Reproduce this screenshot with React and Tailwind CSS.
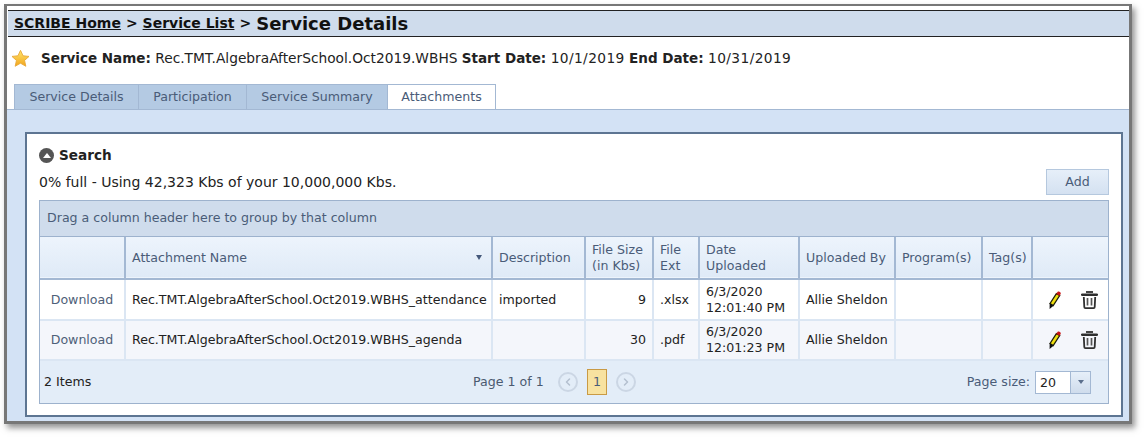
import React from "react";
import { ChevronLeft, ChevronRight } from "lucide-react";

const font = { fontFamily: '"DejaVu Sans", Verdana, sans-serif' };

const tabs = [
  { label: "Service Details", width: "w-[124px]" },
  { label: "Participation", width: "w-[108px]" },
  { label: "Service Summary", width: "w-[141px]" },
  { label: "Attachments", width: "w-[109px]", active: true },
];

const rows = [
  {
    name: "Rec.TMT.AlgebraAfterSchool.Oct2019.WBHS_attendance",
    description: "imported",
    size: "9",
    ext: ".xlsx",
    date: "6/3/2020",
    time: "12:01:40 PM",
  },
  {
    name: "Rec.TMT.AlgebraAfterSchool.Oct2019.WBHS_agenda",
    description: "",
    size: "30",
    ext: ".pdf",
    date: "6/3/2020",
    time: "12:01:23 PM",
  },
];

const headCell =
  "border-r-2 border-[#a3b8d3] px-[6px] text-left align-middle font-normal leading-[16px] text-[#4a5c78] last:border-r-0";
const bodyCell = "border-r-2 border-[#dbe6f3] px-[6px] align-middle leading-[16px] last:border-r-0";

const StarIcon = () => (
  <svg width="19" height="19" viewBox="0 0 21 20">
    <defs>
      <linearGradient id="starFill" x1="0" y1="0" x2="0" y2="1">
        <stop offset="0" stopColor="#ffe56b" />
        <stop offset="1" stopColor="#f2a51c" />
      </linearGradient>
    </defs>
    <path
      d="M10.5 1l2.8 6 6.6.7-4.9 4.4 1.4 6.5-5.9-3.4-5.9 3.4 1.4-6.5L1.1 7.7l6.6-.7z"
      fill="url(#starFill)"
      stroke="#e8a93a"
      strokeWidth="1"
      strokeLinejoin="round"
    />
  </svg>
);

const PencilIcon = () => (
  <svg width="12" height="18" viewBox="0 0 12 18">
    <path d="M1 12.5L7.4 2.6l3.3 1.9L4.2 14.6z" fill="#efdf10" stroke="#1d1d08" strokeWidth="1.3" />
    <path d="M7.2 3l1.3-2c1-.9 3.2-.2 3.3 1.6l-1 2.1z" fill="#c81414" />
    <path d="M.7 12.2l3.8 2.5L.6 18z" fill="#0e0e0e" />
  </svg>
);

const TrashIcon = () => (
  <svg width="17" height="18" viewBox="0 0 17 18" fill="none">
    <path d="M5 1h7" stroke="#444" strokeWidth="2" />
    <path d="M1.2 3.7h14.6" stroke="#2f2f2f" strokeWidth="2.6" strokeLinecap="round" />
    <path d="M2.8 6l.5 10c0 .6.5 1.1 1.1 1.1h8.2c.6 0 1.1-.5 1.1-1.1l.5-10" stroke="#2f2f2f" strokeWidth="1.8" />
    <path d="M6.5 7v7.5M10.5 7v7.5" stroke="#555" strokeWidth="1.7" />
  </svg>
);

const PagerArrow = ({ children }) => (
  <span className="flex h-[20px] w-[20px] items-center justify-center rounded-full border-2 border-[#cbd6e4] text-[#b4c0cf]">
    {children}
  </span>
);

export default function App() {
  return (
    <div className="h-[438px] w-[1146px] bg-white pl-[4px] pt-[4px] text-[12.6px] text-[#222]" style={font}>
      <div className="flex h-[420px] w-[1128px] flex-col border-x-[3px] border-y-[3px] border-[#777] border-t-2 bg-white shadow-[3px_4px_6px_rgba(60,60,60,0.55)]">
        <div className="mt-[4px] ml-px flex h-[27px] shrink-0 items-center gap-[5px] border-y border-[#222] bg-[#cfdcec] pl-[6px] font-bold text-[#111]">
          <span className="text-[14px] underline">SCRIBE Home</span>
          <span className="text-[14px]">&gt;</span>
          <span className="text-[14px] underline">Service List</span>
          <span className="text-[14px]">&gt;</span>
          <span className="text-[18px] leading-none">Service Details</span>
        </div>

        <div className="flex h-[47px] shrink-0 items-center pb-[4px] pl-[4px] text-[13.75px]">
          <StarIcon />
          <span className="ml-[11px] whitespace-pre">
            <b className="text-[13.5px]">Service Name:</b> Rec.TMT.AlgebraAfterSchool.Oct2019.WBHS <b className="text-[13.5px]">Start Date:</b>{" "}
            <span className="tracking-[0.4px]">10/1/2019</span> <b className="text-[13.5px]">End Date:</b>{" "}
            <span className="tracking-[0.4px]">10/31/2019</span>
          </span>
        </div>

        <div className="flex h-[25px] shrink-0 pl-[7px]">
          {tabs.map((tab) => (
            <div
              key={tab.label}
              className={
                tab.active
                  ? `${tab.width} flex items-center justify-center border-x border-t border-[#a3b8d3] bg-white text-[#4a5c78]`
                  : `${tab.width} flex items-center justify-center border-l border-t border-[#a3b8d3] bg-[#b4cae3] text-[#4a5c78]`
              }
            >
              {tab.label}
            </div>
          ))}
        </div>

        <div className="min-h-0 flex-1 border-t border-[#a3b8d3] bg-[#d3e2f5] pb-[3px] pl-[18px] pr-[7px] pt-[22px]">
          <div className="flex h-[285px] w-[1098px] flex-col border-2 border-[#5d7592] bg-white pl-[12px] pr-[12px]">
            <div className="flex h-[35px] shrink-0 items-center gap-[5px] pt-[7px]">
              <span className="flex h-[15px] w-[15px] items-center justify-center rounded-full bg-[#555]">
                <span className="h-0 w-0 border-x-[4px] border-b-[5px] border-x-transparent border-b-white" />
              </span>
              <span className="text-[13.6px] font-bold text-[#222]">Search</span>
            </div>

            <div className="flex h-[26px] shrink-0 items-center justify-between">
              <span className="text-[14px]">0% full - Using 42,323 Kbs of your 10,000,000 Kbs.</span>
              <button className="h-[26px] w-[63px] border border-[#b5c8de] bg-gradient-to-b from-[#e6eff9] to-[#d4e1f1] text-[#4a5c78]">
                Add
              </button>
            </div>

            <div className="mt-[5px] flex h-[204px] w-[1070px] shrink-0 flex-col overflow-hidden border border-[#9db2cd]">
              <div className="flex h-[36px] shrink-0 items-center border-b border-[#9db2cd] bg-[#cfdcec] pl-[7px] text-[#4a5c78]">
                Drag a column header here to group by that column
              </div>

              <table className="w-full shrink-0 table-fixed border-collapse">
                <colgroup>
                  <col className="w-[85px]" />
                  <col className="w-[367px]" />
                  <col className="w-[93px]" />
                  <col className="w-[68px]" />
                  <col className="w-[46px]" />
                  <col className="w-[100px]" />
                  <col className="w-[96px]" />
                  <col className="w-[87px]" />
                  <col className="w-[50px]" />
                  <col className="w-[76px]" />
                </colgroup>
                <thead>
                  <tr className="h-[42px] border-b-2 border-[#a3b8d3] bg-gradient-to-b from-[#edf4fc] to-[#dfeaf7]">
                    <th className={headCell}></th>
                    <th className={headCell}>
                      <div className="flex items-center justify-between pr-[3px]">
                        <span>Attachment Name</span>
                        <span className="h-0 w-0 border-x-[3.5px] border-t-[5px] border-x-transparent border-t-[#44587a]" />
                      </div>
                    </th>
                    <th className={headCell}>Description</th>
                    <th className={headCell}>
                      File Size
                      <br />
                      (in Kbs)
                    </th>
                    <th className={headCell}>
                      File
                      <br />
                      Ext
                    </th>
                    <th className={headCell}>
                      Date
                      <br />
                      Uploaded
                    </th>
                    <th className={headCell}>Uploaded By</th>
                    <th className={headCell}>Program(s)</th>
                    <th className={headCell}>Tag(s)</th>
                    <th className={headCell}></th>
                  </tr>
                </thead>
                <tbody>
                  {rows.map((row, index) => (
                    <tr
                      key={row.name}
                      className={
                        index === 0
                          ? "h-[41px] border-b-2 border-[#dbe6f3] bg-white"
                          : "h-[40px] border-b-2 border-[#dbe6f3] bg-[#f4f6fb]"
                      }
                    >
                      <td className={`${bodyCell} text-center text-[#4e6078]`}>Download</td>
                      <td className={`${bodyCell} whitespace-nowrap`}>{row.name}</td>
                      <td className={bodyCell}>{row.description}</td>
                      <td className={`${bodyCell} text-right`}>{row.size}</td>
                      <td className={bodyCell}>{row.ext}</td>
                      <td className={`${bodyCell} whitespace-nowrap`}>
                        {row.date}
                        <br />
                        {row.time}
                      </td>
                      <td className={`${bodyCell} whitespace-nowrap`}>Allie Sheldon</td>
                      <td className={bodyCell}></td>
                      <td className={bodyCell}></td>
                      <td className={bodyCell}>
                        <div className="flex items-center justify-between pl-[10px] pr-[4px]">
                          <PencilIcon />
                          <TrashIcon />
                        </div>
                      </td>
                    </tr>
                  ))}
                </tbody>
              </table>

              <div className="flex min-h-0 flex-1 items-center bg-[#e3edf8] pl-[4px]">
                <span className="w-[429px]">2 Items</span>
                <span className="w-[85px] text-[#4b5a70]">Page 1 of 1</span>
                <PagerArrow>
                  <ChevronLeft size={12} strokeWidth={3} />
                </PagerArrow>
                <span className="mx-[9px] flex h-[26px] w-[20px] items-center justify-center border border-[#c99a45] bg-[#f8e2a0] text-[#4a5c78]">
                  1
                </span>
                <PagerArrow>
                  <ChevronRight size={12} strokeWidth={3} />
                </PagerArrow>
                <span className="ml-auto text-[#4a5c78]">Page size:</span>
                <div className="ml-[5px] mr-[17px] flex h-[23px] w-[56px] border border-[#a3b8d3] bg-white">
                  <span className="flex-1 pl-[4px] leading-[21px]">20</span>
                  <span className="flex w-[20px] items-center justify-center border-l border-[#a3b8d3] bg-gradient-to-b from-[#e6eff9] to-[#cfdcec]">
                    <span className="h-0 w-0 border-x-[3.5px] border-t-[4px] border-x-transparent border-t-[#5b6f8c]" />
                  </span>
                </div>
              </div>
            </div>
          </div>
        </div>
      </div>
    </div>
  );
}
